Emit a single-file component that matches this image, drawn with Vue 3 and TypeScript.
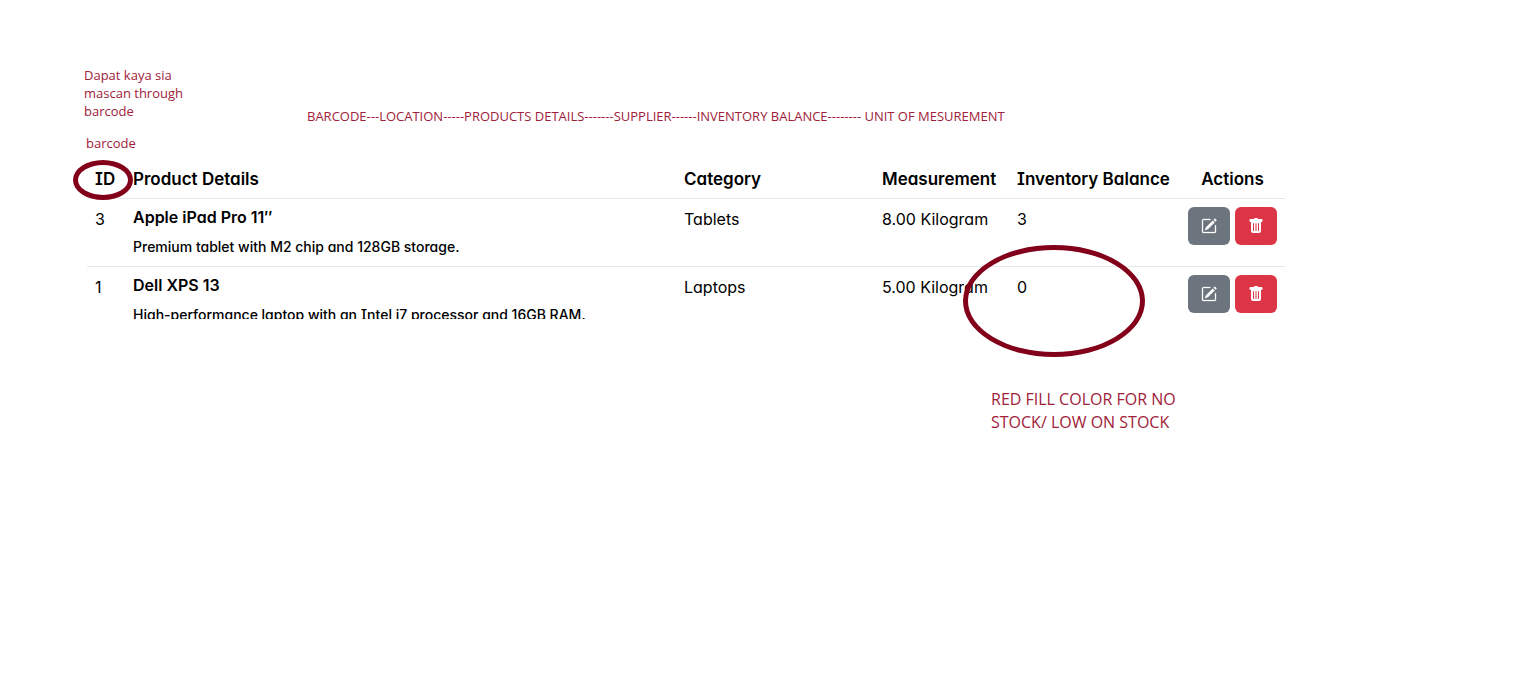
<script setup lang="ts">
interface Product {
  id: number
  name: string
  details: string
  category: string
  measurement: string
  balance: number
}

const products: Product[] = [
  {
    id: 3,
    name: 'Apple iPad Pro 11″',
    details: 'Premium tablet with M2 chip and 128GB storage.',
    category: 'Tablets',
    measurement: '8.00 Kilogram',
    balance: 3,
  },
  {
    id: 1,
    name: 'Dell XPS 13',
    details: 'High-performance laptop with an Intel i7 processor and 16GB RAM.',
    category: 'Laptops',
    measurement: '5.00 Kilogram',
    balance: 0,
  },
]
</script>

<template>
  <main class="page">
    <header class="notes">
      <p class="note scan">Dapat kaya sia mascan through barcode</p>
      <p class="note columns">BARCODE---LOCATION-----PRODUCTS DETAILS-------SUPPLIER------INVENTORY BALANCE-------- UNIT OF MESUREMENT</p>
    </header>
    <p class="note barcode">barcode</p>

    <section class="board">
      <div class="viewport">
        <table>
          <colgroup>
            <col class="c-id" />
            <col />
            <col class="c-category" />
            <col class="c-measure" />
            <col class="c-balance" />
            <col class="c-actions" />
          </colgroup>
          <thead>
            <tr>
              <th scope="col">ID</th>
              <th scope="col">Product Details</th>
              <th scope="col">Category</th>
              <th scope="col">Measurement</th>
              <th scope="col">Inventory Balance</th>
              <th scope="col" class="center">Actions</th>
            </tr>
          </thead>
          <tbody>
            <tr v-for="p in products" :key="p.id">
              <td>{{ p.id }}</td>
              <td>
                <h6>{{ p.name }}</h6>
                <p class="details">{{ p.details }}</p>
              </td>
              <td>{{ p.category }}</td>
              <td>{{ p.measurement }}</td>
              <td>{{ p.balance }}</td>
              <td>
                <div class="actions">
                  <button type="button" class="btn edit" :aria-label="`Edit ${p.name}`">
                    <svg viewBox="0 0 16 16" width="16" height="16" fill="currentColor" aria-hidden="true">
                      <path d="M15.502 1.94a.5.5 0 0 1 0 .706L14.459 3.69l-2-2L13.502.646a.5.5 0 0 1 .707 0l1.293 1.293zm-1.75 2.456-2-2L4.939 9.21a.5.5 0 0 0-.121.196l-.805 2.414a.25.25 0 0 0 .316.316l2.414-.805a.5.5 0 0 0 .196-.12l6.813-6.814z" />
                      <path fill-rule="evenodd" stroke="currentColor" stroke-width="0.3" d="M1 13.5A1.5 1.5 0 0 0 2.5 15h11a1.5 1.5 0 0 0 1.5-1.5v-6a.5.5 0 0 0-1 0v6a.5.5 0 0 1-.5.5h-11a.5.5 0 0 1-.5-.5v-11a.5.5 0 0 1 .5-.5H9a.5.5 0 0 0 0-1H2.5A1.5 1.5 0 0 0 1 2.5z" />
                    </svg>
                  </button>
                  <button type="button" class="btn remove" :aria-label="`Delete ${p.name}`">
                    <svg viewBox="0 0 16 16" width="16" height="16" fill="currentColor" aria-hidden="true">
                      <path d="M2.5 1a1 1 0 0 0-1 1v1a1 1 0 0 0 1 1H3v9a2 2 0 0 0 2 2h6a2 2 0 0 0 2-2V4h.5a1 1 0 0 0 1-1V2a1 1 0 0 0-1-1H10a1 1 0 0 0-1-1H7a1 1 0 0 0-1 1zm3 4a.5.5 0 0 1 .5.5v7a.5.5 0 0 1-1 0v-7a.5.5 0 0 1 .5-.5M8 5a.5.5 0 0 1 .5.5v7a.5.5 0 0 1-1 0v-7A.5.5 0 0 1 8 5m3 .5v7a.5.5 0 0 1-1 0v-7a.5.5 0 0 1 1 0" />
                    </svg>
                  </button>
                </div>
              </td>
            </tr>
          </tbody>
        </table>
      </div>
      <span class="ring ring-id"></span>
      <span class="ring ring-balance"></span>
    </section>

    <p class="note stock">RED FILL COLOR FOR NO STOCK/ LOW ON STOCK</p>
  </main>
</template>

<style>
body {
  margin: 0;
  background: #fff;
}
</style>

<style scoped>
.page {
  padding: 66px 248px 0 84px;
  color: #000;
  font-family: Inter, "Liberation Sans", sans-serif;
  font-size: 16px;
  font-feature-settings: "cv08", "cv11";
  line-height: 24px;
}
.note {
  margin: 0;
  color: #a0213a;
  font-family: "Open Sans", "Noto Sans", sans-serif;
  font-size: 13px;
  line-height: 18px;
}
.notes {
  display: flex;
  align-items: flex-start;
  gap: 113px;
}
.scan {
  width: 110px;
}
.columns {
  padding-top: 41px;
  white-space: nowrap;
}
.notes + .barcode {
  padding: 9px 0 6px 2px;
}
.board {
  position: relative;
  margin-left: 3px;
}
.viewport {
  height: 161px;
  overflow: hidden;
}
table {
  width: 100%;
  table-layout: fixed;
  border-spacing: 0;
}
.c-id {
  width: 38px;
}
.c-category {
  width: 198px;
}
.c-measure {
  width: 135px;
}
.c-balance {
  width: 171px;
}
.c-actions {
  width: 105px;
}
th,
td {
  padding: 8px;
  border-bottom: 1px solid #e6e8ea;
  text-align: left;
  vertical-align: top;
  white-space: nowrap;
}
th {
  padding: 9px 8px 7px;
  font-size: 17px;
  font-weight: 600;
}
.center {
  text-align: center;
}
h6 {
  margin: 0 0 8px;
  font-size: 16px;
  font-weight: 600;
  line-height: 20px;
}
.details {
  margin: 0;
  font-size: 14px;
  font-weight: 500;
  line-height: 23px;
}
.actions {
  display: flex;
  justify-content: center;
  gap: 5px;
}
.btn {
  display: flex;
  align-items: center;
  justify-content: center;
  width: 42px;
  height: 38px;
  padding: 0;
  border: 0;
  border-radius: 6px;
  color: #fff;
}
.edit {
  background: #6c757d;
}
.remove {
  background: #dc3545;
}
.ring {
  position: absolute;
  box-sizing: border-box;
  border: 5px solid #82001a;
  border-radius: 50%;
}
.ring-id {
  top: 2px;
  left: -14px;
  width: 60px;
  height: 40px;
}
.ring-balance {
  top: 87px;
  right: 140px;
  width: 182px;
  height: 112px;
}
.stock {
  width: 204px;
  margin: 69px 90px 0 auto;
  font-size: 16px;
  line-height: 23px;
}
</style>
